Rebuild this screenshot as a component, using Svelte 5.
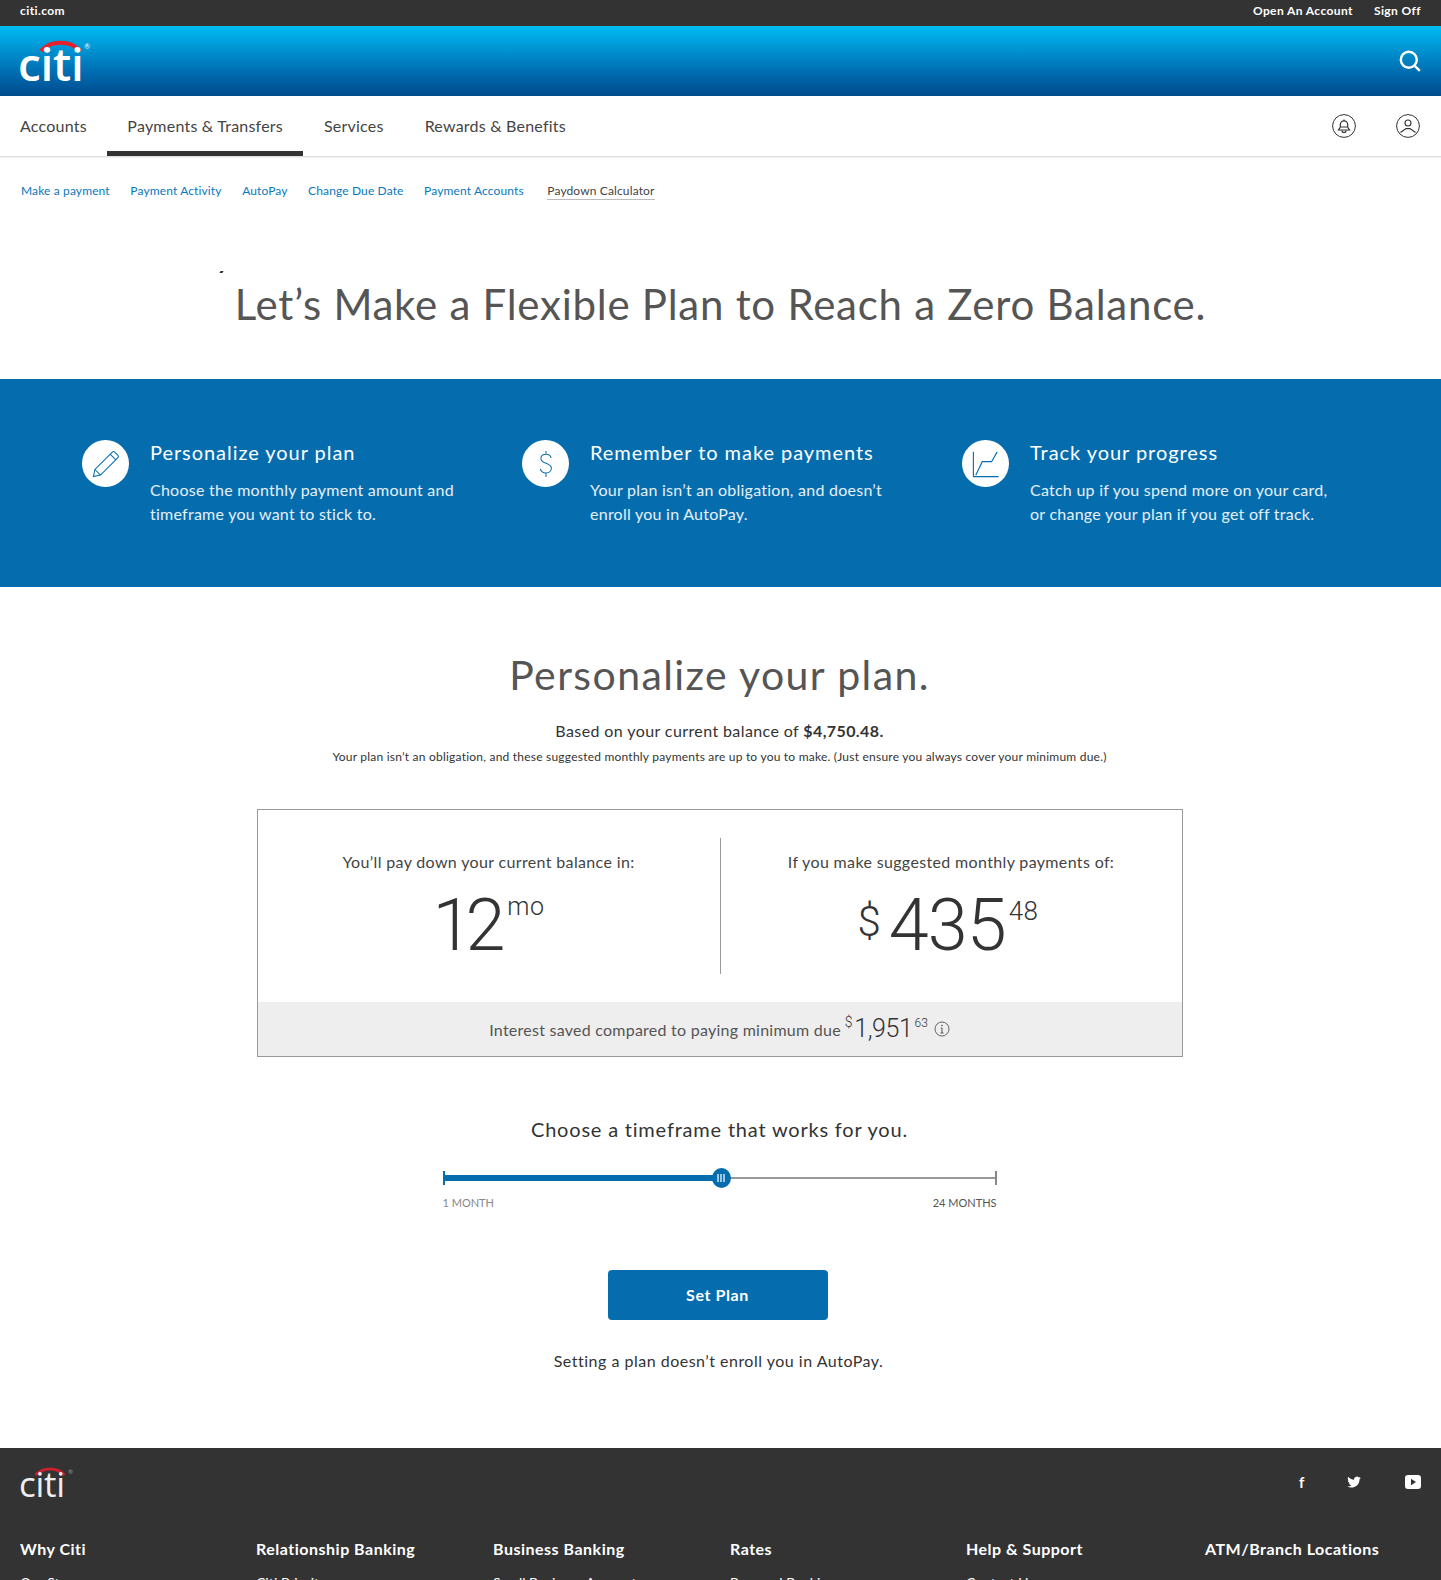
<script lang="ts">
  const nav = ['Accounts', 'Payments & Transfers', 'Services', 'Rewards & Benefits'];
  const subnav = ['Make a payment', 'Payment Activity', 'AutoPay', 'Change Due Date', 'Payment Accounts', 'Paydown Calculator'];
  const footer = [
    ['Why Citi', 'Our Story'],
    ['Relationship Banking', 'Citi Priority'],
    ['Business Banking', 'Small Business Accounts'],
    ['Rates', 'Personal Banking'],
    ['Help & Support', 'Contact Us'],
    ['ATM/Branch Locations', '']
  ];
</script>

<div class="page">
  <div class="topbar">
    <a href="#top">citi.com</a>
    <div class="topbar-right">
      <a href="#top">Open An Account</a>
      <a href="#top">Sign Off</a>
    </div>
  </div>

  <header class="brand">
    <div class="logo">
      <svg class="arc" viewBox="0 0 44 14" aria-hidden="true"><path d="M1 13C11 1 33 1 43 13" fill="none" stroke="#e8202c" stroke-width="4.4" /></svg>
      <span class="logo-text">citi</span>
      <span class="reg">®</span>
    </div>
    <svg class="search" viewBox="0 0 22 22" aria-hidden="true"><circle cx="9.8" cy="9.8" r="8" fill="none" stroke="#fff" stroke-width="2.4" /><path d="M15.8 15.8l5 5" stroke="#fff" stroke-width="2.4" /></svg>
  </header>

  <nav class="mainnav">
    <ul>
      {#each nav as item, i}
        <li class:active={i === 1}>{item}</li>
      {/each}
    </ul>
    <div class="nav-icons">
      <svg viewBox="0 0 24 24" aria-hidden="true">
        <circle cx="12" cy="12" r="11.4" fill="none" stroke="#333" />
        <path d="M6.5 16h11l-1.8-2.6V10.5a3.7 3.7 0 0 0-7.4 0v2.9zM9 13h6M12 5.4v1.2" fill="none" stroke="#333" stroke-width="1.2" />
        <path d="M10 16.5a2 2 0 0 0 4 0" fill="none" stroke="#333" stroke-width="1.2" />
      </svg>
      <svg viewBox="0 0 24 24" aria-hidden="true">
        <circle cx="12" cy="12" r="11.4" fill="none" stroke="#333" />
        <circle cx="12" cy="9" r="3" fill="none" stroke="#333" stroke-width="1.1" />
        <path d="M4.5 18.500L10 14.600h4l5.500 3.900" fill="none" stroke="#333" stroke-width="1.1" />
      </svg>
    </div>
  </nav>

  <div class="subnav">
    {#each subnav as item, i}
      <a href="#top" class:current={i === 5}>{item}</a>
    {/each}
  </div>

  <div class="hero">
    <span class="speck"></span>
    <h1>Let’s Make a Flexible Plan to Reach a Zero Balance.</h1>
  </div>

  <section class="band">
    <div class="feature">
      <div class="circle">
        <svg viewBox="0 0 30 30" aria-hidden="true"><path d="M1.500 28.500l1.600-7.600L21.800 2.200a1.800 1.800 0 0 1 2.500 0l3.500 3.500a1.800 1.800 0 0 1 0 2.500L9.100 26.900zM3.100 20.900l6 6M19.500 4.500l6 6" fill="none" stroke="#056dae" stroke-width="1.1" /></svg>
      </div>
      <div>
        <h3>Personalize your plan</h3>
        <p>Choose the monthly payment amount and timeframe you want to stick to.</p>
      </div>
    </div>
    <div class="feature">
      <div class="circle">
        <svg viewBox="0 0 30 30" aria-hidden="true"><path d="M20.500 8.500c-.6-2.600-2.800-4-5.500-4-3.100 0-5.500 1.800-5.500 4.600 0 6.200 11.300 4.200 11.300 10.500 0 3-2.600 5-5.800 5-3 0-5.400-1.600-6-4.300M15 1v3.500M15 24.600V29" fill="none" stroke="#056dae" stroke-width="1.1" /></svg>
      </div>
      <div>
        <h3>Remember to make payments</h3>
        <p>Your plan isn’t an obligation, and doesn’t enroll you in AutoPay.</p>
      </div>
    </div>
    <div class="feature">
      <div class="circle">
        <svg viewBox="0 0 30 30" class="wide" aria-hidden="true"><path d="M1.500 2v26.500H28.500" fill="none" stroke="#056dae" stroke-width="1.200" /><path d="M4 27l7-14.500h10L27 2" fill="none" stroke="#056dae" stroke-width="1.200" /></svg>
      </div>
      <div>
        <h3>Track your progress</h3>
        <p>Catch up if you spend more on your card,<br />or change your plan if you get off track.</p>
      </div>
    </div>
  </section>

  <main class="plan">
    <h2>Personalize your plan.</h2>
    <p class="balance">Based on your current balance of <strong>$4,750.48.</strong></p>
    <p class="fine">Your plan isn’t an obligation, and these suggested monthly payments are up to you to make. (Just ensure you always cover your minimum due.)</p>

    <div class="summary">
      <div class="summary-top">
        <div class="summary-col">
          <div class="label">You’ll pay down your current balance in:</div>
          <div class="figure"><span class="big tight">12</span><span class="unit">mo</span></div>
        </div>
        <div class="summary-col">
          <div class="label">If you make suggested monthly payments of:</div>
          <div class="figure"><span class="dollar">$</span><span class="big">435</span><span class="cents">48</span></div>
        </div>
      </div>
      <div class="summary-foot">
        <span>Interest saved compared to paying minimum due</span>
        <span class="saved"><sup>$</sup>1,951<sup class="saved-cents">63</sup></span>
        <svg viewBox="0 0 16 16" aria-hidden="true"><circle cx="8" cy="8" r="7" fill="none" stroke="#555" stroke-width="0.9" /><path d="M8 7v5M6.500 12h3M6.800 7H8" fill="none" stroke="#555" /><circle cx="8" cy="4.500" r="0.800" fill="#555" /></svg>
      </div>
    </div>

    <div class="timeframe">Choose a timeframe that works for you.</div>
    <div class="slider">
      <div class="track">
        <div class="fill"></div>
        <div class="thumb"><i></i><i></i><i></i></div>
      </div>
      <div class="slider-labels"><span class="min">1 MONTH</span><span>24 MONTHS</span></div>
    </div>

    <button class="set-plan">Set Plan</button>
    <p class="note">Setting a plan doesn’t enroll you in AutoPay.</p>
  </main>

  <footer>
    <div class="footer-top">
      <div class="logo logo-small">
        <svg class="arc" viewBox="0 0 44 14" aria-hidden="true"><path d="M1 13C11 1 33 1 43 13" fill="none" stroke="#c8202c" stroke-width="4.4" /></svg>
        <span class="logo-text">citi</span>
        <span class="reg">®</span>
      </div>
      <div class="social">
        <span class="fb">f</span>
        <svg viewBox="0 0 16 14" class="tw" aria-hidden="true"><path d="M16 2.200l-1.700.5 1.300-1.700-1.900.8A3.300 3.300 0 0 0 8 4.500C5.200 4.400 2.800 3 1.200 1c-.9 1.600-.4 3.600 1 4.500L.8 5.100c0 1.600 1.100 3 2.700 3.300l-1.500.1c.4 1.300 1.600 2.200 3 2.300A6.600 6.600 0 0 1 0 12.200C6.500 15.500 14.600 11.500 14.400 4z" fill="#fff" /></svg>
        <svg viewBox="0 0 16 14" class="yt" aria-hidden="true"><rect width="16" height="14" rx="3" fill="#fff" /><path d="M6 3.800v6.400L11 7z" fill="#333" /></svg>
      </div>
    </div>
    <div class="footer-cols">
      {#each footer as [head, link]}
        <div>
          <div class="footer-head">{head}</div>
          <div class="footer-link">{link}</div>
        </div>
      {/each}
    </div>
  </footer>
</div>

<style>
  :global(body) {
    margin: 0;
    background: #fff;
  }
  .page {
    height: 1580px;
    overflow: hidden;
    font-family: Lato, "Open Sans", sans-serif;
    color: #333;
  }
  a {
    text-decoration: none;
    color: inherit;
  }
  h1, h2, h3, p, ul {
    margin: 0;
    padding: 0;
    font-weight: 300;
  }
  .topbar {
    height: 26px;
    box-sizing: border-box;
    padding: 0 20px 5px;
    background: #333;
    color: #fff;
    display: flex;
    justify-content: space-between;
    align-items: center;
    font-size: 12px;
    font-weight: 700;
    letter-spacing: 0.4px;
  }
  .topbar-right {
    display: flex;
    gap: 21px;
  }
  .brand {
    height: 70px;
    background: linear-gradient(#00bdf2 0%, #00a3e0 20%, #0069ad 70%, #004b8c 100%);
    display: flex;
    justify-content: space-between;
    align-items: center;
    padding: 0 20px;
  }
  .logo {
    position: relative;
    width: 70px;
    height: 42px;
    color: #fff;
    margin-top: -2px;
  }
  .logo-text {
    position: absolute;
    left: -2px;
    bottom: -8px;
    font-family: "Open Sans", sans-serif;
    font-size: 46px;
    line-height: 52px;
    letter-spacing: -0.3px;
    font-weight: 600;
  }
  .arc {
    position: absolute;
    left: 20px;
    top: 0;
    width: 41px;
    height: 13px;
  }
  .reg {
    position: absolute;
    right: 0;
    top: 3px;
    font-size: 7px;
    line-height: 8px;
  }
  .search {
    width: 22px;
    height: 22px;
  }
  .mainnav {
    height: 60px;
    display: flex;
    justify-content: space-between;
    border-bottom: 1px solid #ddd;
    box-shadow: 0 1px 1px rgba(0, 0, 0, 0.05);
    padding-right: 21px;
  }
  .mainnav ul {
    display: flex;
    list-style: none;
  }
  .mainnav li {
    padding: 0 20.500px;
    height: 60px;
    box-sizing: border-box;
    line-height: 60px;
    font-size: 16px;
    letter-spacing: 0.22px;
    color: #444;
    font-weight: 400;
  }
  .mainnav li:first-child {
    padding: 0 20px;
  }
  .mainnav li.active {
    border-bottom: 5px solid #333;
  }
  .nav-icons {
    display: flex;
    gap: 40px;
    align-items: center;
  }
  .nav-icons svg {
    width: 24px;
    height: 24px;
  }
  .subnav {
    display: flex;
    gap: 20.500px;
    padding: 26px 0 0 21px;
    font-size: 12px;
    line-height: 16px;
    letter-spacing: 0.13px;
    color: #0a78bd;
  }
  .subnav a.current {
    color: #444;
    margin-left: 3px;
    border-bottom: 1px solid #bbb;
    line-height: 14px;
    height: 15px;
    margin-top: 1px;
  }
  .hero {
    position: relative;
    height: 179px;
    box-sizing: border-box;
    padding-top: 76px;
    text-align: center;
  }
  .speck {
    position: absolute;
    left: 220px;
    top: 71px;
    width: 3px;
    height: 2px;
    background: #333;
    transform: skewX(-30deg);
  }
  h1 {
    font-size: 42px;
    line-height: 56px;
    letter-spacing: 0.75px;
    color: #555;
    font-weight: 400;
  }
  .band {
    height: 208px;
    background: #056dae;
    box-sizing: border-box;
    padding: 61px 0 0 82px;
    display: flex;
    color: #fff;
  }
  .feature {
    width: 440px;
    display: flex;
    gap: 21px;
  }
  .circle {
    width: 47px;
    height: 47px;
    flex: none;
    border-radius: 50%;
    background: #fff;
    display: flex;
    align-items: center;
    justify-content: center;
  }
  .circle svg {
    width: 28px;
    height: 28px;
  }
  .feature div:last-child {
    width: 320px;
  }
  h3 {
    font-size: 20px;
    line-height: 28px;
    letter-spacing: 0.95px;
    margin: -2px 0 12px;
    font-weight: 400;
  }
  .feature p {
    font-size: 16px;
    line-height: 24px;
    letter-spacing: 0.25px;
    font-weight: 400;
    color: #e6f0f7;
  }
  .plan {
    height: 861px;
    display: flex;
    flex-direction: column;
    align-items: center;
    padding-top: 62px;
    box-sizing: border-box;
  }
  h2 {
    font-size: 41px;
    line-height: 52px;
    letter-spacing: 1.4px;
    color: #555;
    font-weight: 400;
    margin-right: 2px;
  }
  .balance {
    margin-top: 18px;
    font-size: 16px;
    line-height: 24px;
    letter-spacing: 0.4px;
    font-weight: 400;
    margin-right: 2px;
  }
  .balance strong {
    font-weight: 700;
  }
  .fine {
    margin-top: 6px;
    font-size: 12px;
    line-height: 16px;
    letter-spacing: 0.22px;
    font-weight: 400;
    margin-right: 2px;
  }
  .summary {
    margin-top: 44px;
    margin-right: 2px;
    width: 926px;
    height: 248px;
    box-sizing: border-box;
    border: 1px solid #999;
    display: flex;
    flex-direction: column;
  }
  .summary-top {
    flex: 1;
    display: flex;
    padding: 28px 0;
  }
  .summary-col {
    flex: 1;
    text-align: center;
    padding-top: 13px;
  }
  .summary-col:first-child {
    flex: 0 0 462px;
  }
  .summary-col + .summary-col {
    border-left: 1px solid #999;
  }
  .label {
    font-size: 16px;
    line-height: 22px;
    letter-spacing: 0.35px;
    color: #444;
  }
  .figure {
    display: flex;
    justify-content: center;
    align-items: flex-start;
    margin-top: 17px;
    height: 72px;
    font-family: Roboto, sans-serif;
  }
  .big {
    font-size: 72px;
    line-height: 72px;
    font-weight: 300;
    letter-spacing: -1px;
  }
  .big.tight {
    letter-spacing: -7px;
    margin-right: 8px;
  }
  .unit, .cents {
    font-size: 25px;
    line-height: 30px;
    font-weight: 300;
    margin-left: 1px;
    margin-top: 2px;
    letter-spacing: 0.5px;
  }
  .cents {
    font-size: 26px;
    margin-left: 3px;
    margin-top: 6px;
  }
  .dollar {
    font-size: 42px;
    line-height: 56px;
    font-weight: 300;
    margin: 4px 8px 0 0;
  }
  .figure:has(.cents) {
    margin-right: 6px;
  }
  .summary-foot {
    height: 54px;
    background: #eee;
    display: flex;
    align-items: center;
    justify-content: center;
    gap: 4px;
    font-size: 16px;
    letter-spacing: 0.25px;
    color: #555;
  }
  .summary-foot svg {
    width: 16px;
    height: 16px;
    margin-left: 2px;
  }
  .saved {
    font-family: Roboto, sans-serif;
    font-size: 25px;
    line-height: 30px;
    font-weight: 300;
    color: #333;
    letter-spacing: -0.4px;
  }
  .saved sup {
    font-size: 14px;
    vertical-align: 10px;
    line-height: 0;
    margin-right: 2px;
  }
  .saved sup.saved-cents {
    font-size: 12px;
    margin: 0 0 0 2px;
    letter-spacing: 0;
  }
  .timeframe {
    margin-top: 58px;
    font-size: 20px;
    line-height: 28px;
    letter-spacing: 0.8px;
    margin-right: 2px;
  }
  .slider {
    margin-top: 28px;
    margin-right: 2px;
    width: 554px;
  }
  .track {
    position: relative;
    height: 14px;
    border-right: 2px solid #888;
    border-left: 2px solid #056dae;
    box-sizing: border-box;
    background: linear-gradient(#999, #999) center / 100% 2px no-repeat;
  }
  .fill {
    position: absolute;
    left: 0;
    top: 4px;
    width: 276px;
    height: 6px;
    background: #056dae;
  }
  .thumb {
    position: absolute;
    left: 267px;
    top: -3px;
    width: 19px;
    height: 20px;
    border-radius: 50%;
    background: #056dae;
    display: flex;
    align-items: center;
    justify-content: center;
    gap: 1px;
  }
  .thumb i {
    width: 2px;
    height: 8px;
    background: #9cc8e6;
  }
  .slider-labels {
    display: flex;
    justify-content: space-between;
    margin-top: 10px;
    font-size: 11px;
    line-height: 16px;
    color: #555;
  }
  .slider-labels .min {
    color: #888;
  }
  .set-plan {
    margin-top: 59px;
    margin-right: 6px;
    width: 220px;
    height: 50px;
    padding: 0 0 2px;
    border: 0;
    border-radius: 4px;
    background: #056dae;
    color: #fff;
    font-family: inherit;
    font-size: 16px;
    font-weight: 700;
    letter-spacing: 0.6px;
  }
  .note {
    margin-top: 29px;
    margin-right: 4px;
    font-size: 16px;
    line-height: 24px;
    letter-spacing: 0.5px;
    font-weight: 400;
  }
  footer {
    background: #333;
    color: #fff;
    height: 132px;
    padding: 18px 20px 0;
  }
  .footer-top {
    display: flex;
    justify-content: space-between;
    height: 72px;
  }
  .logo-small {
    width: 54px;
    height: 32px;
    margin-top: 0;
    color: #eee;
  }
  .logo-small .logo-text {
    font-size: 35px;
    line-height: 40px;
    bottom: -6px;
    left: -1px;
    font-weight: 500;
  }
  .logo-small .arc {
    width: 30px;
    height: 10px;
    left: 15px;
  }
  .logo-small .reg {
    color: #999;
    font-size: 6px;
    top: 2px;
    right: 1px;
  }
  .social {
    display: flex;
    align-items: center;
    height: 32px;
  }
  .fb {
    font-weight: 700;
    font-size: 15px;
    width: 50px;
    padding-left: 2px;
    box-sizing: border-box;
  }
  .tw {
    width: 14px;
    height: 12px;
    margin-right: 44px;
  }
  .yt {
    width: 16px;
    height: 14px;
  }
  .footer-cols {
    display: grid;
    grid-template-columns: 236px 237px 237px 236px 239px 1fr;
  }
  .footer-head {
    font-size: 16px;
    line-height: 22px;
    font-weight: 700;
    letter-spacing: 0.5px;
  }
  .footer-link {
    margin-top: 13px;
    font-size: 14px;
    line-height: 20px;
    font-weight: 400;
  }
</style>
